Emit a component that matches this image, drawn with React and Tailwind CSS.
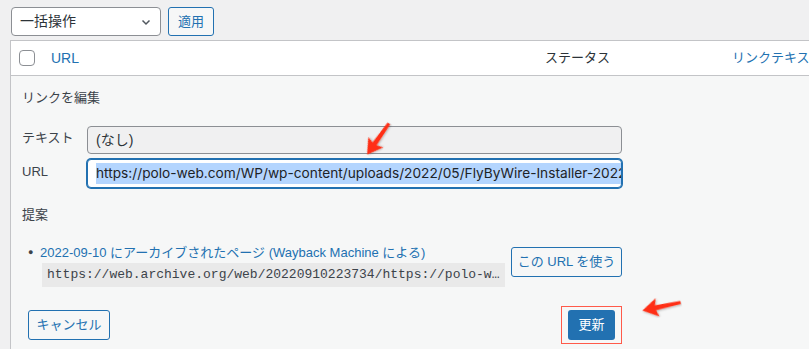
import React from 'react';

// red annotation arrow, drawn as a shape
function Arrow({ className, rotate }) {
  return (
    <svg className={className} viewBox="0 0 40 20" style={{ transform: `rotate(${rotate}deg)` }}>
      <defs>
        <filter id="sh" x="-20%" y="-40%" width="140%" height="180%">
          <feDropShadow dx="0.5" dy="1" stdDeviation="0.8" floodColor="#000" floodOpacity="0.3" />
        </filter>
      </defs>
      <path d="M1 10 L16 1 L14 7.5 L39 8.5 L39 11.5 L14 12.5 L16 19 Z" fill="#ff2d12" filter="url(#sh)" />
    </svg>
  );
}

function App() {
  return (
    <div className="relative w-[809px] h-[349px] overflow-hidden bg-[#f0f0f1] text-[13px] text-[#3c434a] font-['Liberation_Sans','Noto_Sans_CJK_JP',sans-serif]">
      {/* bulk action bar */}
      <div className="flex items-center gap-[7px] pl-[11px] pt-[7px] h-[40px] items-start">
        <div className="flex items-center justify-between w-[150px] h-[29px] bg-white border border-[#8c8f94] rounded-[4px] pl-[8px] pr-[8px] text-[14px] text-[#2c3338]">
          <span>一括操作</span>
          <svg width="12" height="12" viewBox="0 0 12 12">
            <path d="M2.5 4.5 L6 8 L9.5 4.5" fill="none" stroke="#50575e" strokeWidth="1.5" />
          </svg>
        </div>
        <button className="h-[29px] px-[9px] border border-[#2271b1] rounded-[3px] bg-[#f6f7f7] text-[#2271b1] text-[13px]">
          適用
        </button>
      </div>

      {/* list table */}
      <div className="ml-[10px] border-l border-t border-[#c3c4c7] bg-white">
        <div className="grid grid-cols-[40px_494px_187px_1fr] items-center h-[35px] border-b border-[#c3c4c7] text-[14px]">
          <div className="pl-[8px]">
            <div className="w-[16px] h-[16px] border border-[#8c8f94] rounded-[4px] bg-white"></div>
          </div>
          <div className="text-[#2271b1]">URL</div>
          <div className="text-[#2c3338] text-[13px]">ステータス</div>
          <div className="text-[#2271b1] text-[13px] whitespace-nowrap overflow-hidden">リンクテキスト</div>
        </div>

        {/* inline edit panel */}
        <div className="bg-[#f6f7f7] h-[280px] pl-[11px] pt-[14px]">
          <div className="h-[16px] leading-[16px]">リンクを編集</div>

          <div className="flex items-center mt-[20px] h-[28px]">
            <div className="w-[65px] -mt-[4px]">テキスト</div>
            <div className="w-[535px] h-[28px] flex items-center px-[8px] bg-[#f0f0f1] border border-[#8c8f94] rounded-[4px] text-[14px] text-[#2c3338]">
              (なし)
            </div>
          </div>

          <div className="flex items-center mt-[5px] h-[29px]">
            <div className="w-[65px] -mt-[4px]">URL</div>
            <div className="w-[535px] h-[29px] flex items-center px-[8px] bg-white border border-[#2271b1] shadow-[0_0_0_1px_#2271b1] rounded-[4px] text-[13.7px] text-[#1d2327] font-['Inter','Liberation_Sans',sans-serif] overflow-hidden whitespace-nowrap">
              <span className="bg-[#b4d5fe]">https://polo-web.com/WP/wp-content/uploads/2022/05/FlyByWire-Installer-2022-05.exe</span>
            </div>
          </div>

          <div className="mt-[19px] h-[16px] leading-[16px]">提案</div>

          <div className="flex mt-[22px]">
            <div className="w-[489px]">
              <div className="flex items-center h-[16px]">
                <span className="w-[7px] ml-[6px] text-[#3c434a] text-[9px]">●</span>
                <span className="ml-[5px] text-[#2271b1] whitespace-nowrap">2022-09-10 にアーカイブされたページ (Wayback Machine による)</span>
              </div>
              <div className="ml-[20px] mt-[2px] w-[463px] h-[24px] flex items-center px-[5px] bg-[#e9e9e9] font-['Liberation_Mono',monospace] text-[13px] text-[#3c434a] whitespace-nowrap overflow-hidden">
                https://web.archive.org/web/20220910223734/https://polo-w…
              </div>
            </div>
            <button className="mt-[2px] w-[111px] h-[30px] border border-[#2271b1] rounded-[3px] bg-[#f6f7f7] text-[#2271b1] text-[13px]">
              この URL を使う
            </button>
          </div>

          <div className="flex items-center mt-[19px]">
            <button className="ml-[6px] w-[82px] h-[30px] border border-[#2271b1] rounded-[3px] bg-[#f6f7f7] text-[#2271b1] text-[13px]">
              キャンセル
            </button>
            <div className="ml-[451px] p-[3px_6px] border border-[#ff5a4a]">
              <button className="block w-[47px] h-[30px] rounded-[3px] bg-[#2271b1] text-white text-[13px]">
                更新
              </button>
            </div>
          </div>
        </div>
      </div>

      {/* annotation arrows */}
      <Arrow className="absolute left-[358px] top-[129px] w-[40px] h-[20px]" rotate={-55} />
      <Arrow className="absolute left-[641px] top-[296px] w-[41px] h-[21px]" rotate={-12} />
    </div>
  );
}

export default App;
